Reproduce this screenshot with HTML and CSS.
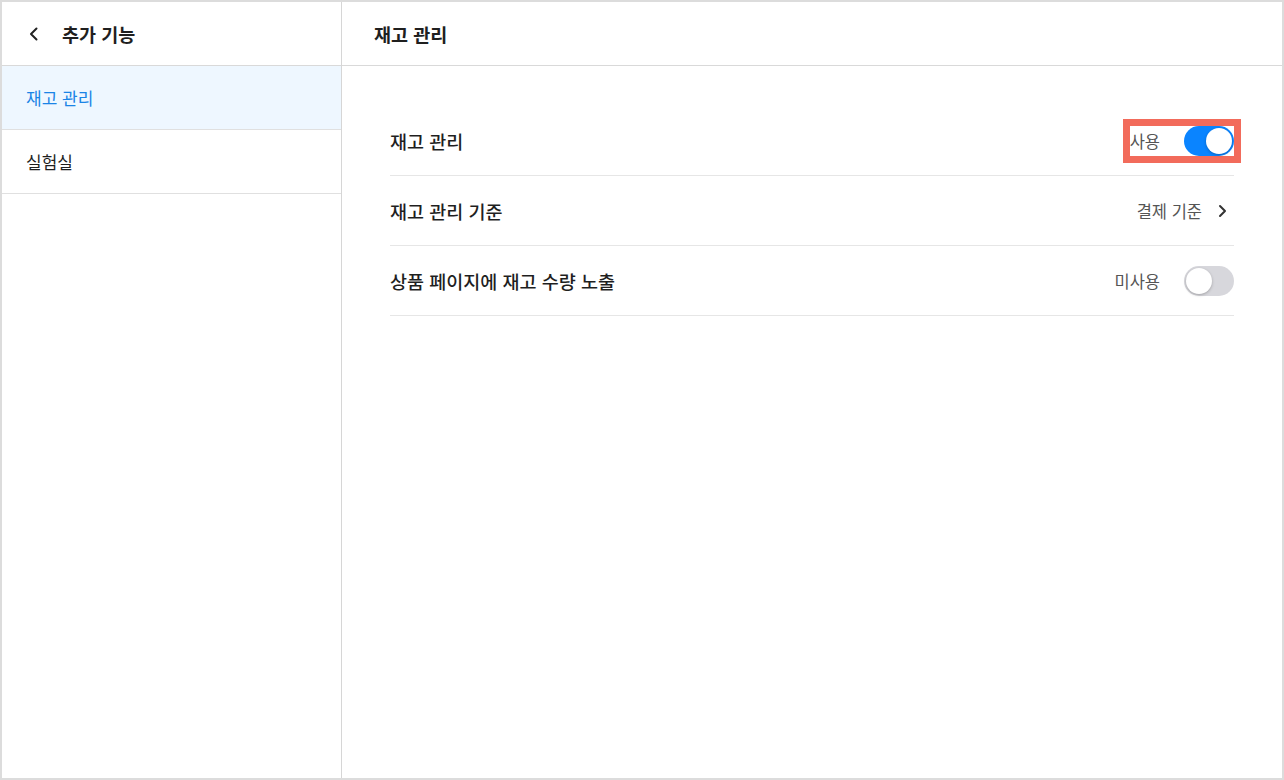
FILE: index.html
```html
<!DOCTYPE html>
<html lang="ko">
<head>
  <meta charset="UTF-8">
  <meta name="viewport" content="width=device-width, initial-scale=1.0">
  <title>재고 관리</title>
  <link rel="stylesheet" href="styles.css">
</head>
<body>

<div class="frame">
  <aside class="sidebar">
    <div class="side-head">
      <svg class="back" width="16" height="16" viewBox="0 0 16 16">
        <polyline points="10.5,2.5 5,8 10.5,13.5" fill="none" stroke="#222" stroke-width="2" stroke-linecap="round" stroke-linejoin="round"/>
      </svg>
      <h1>추가 기능</h1>
    </div>
    <ul class="side-menu">
      <li class="active">재고 관리</li>
      <li>실험실</li>
    </ul>
  </aside>

  <main class="content">
    <div class="content-head">
      <h2>재고 관리</h2>
    </div>
    <div class="settings">
      <div class="row">
        <span class="label">재고 관리</span>
        <div class="value highlight">
          <span>사용</span>
          <span class="toggle on"><span class="knob"></span></span>
        </div>
      </div>
      <div class="row">
        <span class="label">재고 관리 기준</span>
        <div class="value">
          <span>결제 기준</span>
          <svg class="more" width="16" height="16" viewBox="0 0 16 16">
            <polyline points="6,3 11,8 6,13" fill="none" stroke="#333" stroke-width="2" stroke-linecap="round" stroke-linejoin="round"/>
          </svg>
        </div>
      </div>
      <div class="row">
        <span class="label">상품 페이지에 재고 수량 노출</span>
        <div class="value">
          <span>미사용</span>
          <span class="toggle"><span class="knob"></span></span>
        </div>
      </div>
    </div>
  </main>
</div>

</body>
</html>
```

FILE: styles.css
```css
* {
  box-sizing: border-box;
}
body {
  margin: 0;
  font-family: "Noto Sans CJK KR", "Noto Sans", sans-serif;
  color: #222;
  background: #fff;
}
.frame {
  width: 1284px;
  height: 780px;
  border: 2px solid #dcdcdc;
  display: grid;
  grid-template-columns: 340px 1fr;
}

/* left menu */
.sidebar {
  border-right: 1px solid #d6d6d6;
}
.side-head {
  height: 64px;
  border-bottom: 1px solid #d9d9d9;
  display: flex;
  align-items: center;
  padding-left: 24px;
}
.side-head .back {
  margin-right: 20px;
}
.side-head h1 {
  margin: 0;
  font-size: 18.5px;
  font-weight: 700;
  color: #1f1f1f;
}
.side-menu {
  list-style: none;
  margin: 0;
  padding: 0;
}
.side-menu li {
  height: 64px;
  border-bottom: 1px solid #e0e0e0;
  display: flex;
  align-items: center;
  padding-left: 24px;
  font-size: 17px;
  color: #1f1f1f;
}
.side-menu li.active {
  background: #eef7ff;
  color: #1a84e6;
}

/* right panel */
.content-head {
  height: 64px;
  border-bottom: 1px solid #d9d9d9;
  display: flex;
  align-items: center;
  padding-left: 32px;
}
.content-head h2 {
  margin: 0;
  font-size: 18.5px;
  font-weight: 700;
  color: #1f1f1f;
}
.settings {
  padding: 40px 48px 0 48px;
}
.row {
  height: 70px;
  border-bottom: 1px solid #e6e6e6;
  display: flex;
  align-items: center;
  justify-content: space-between;
}
.label {
  font-size: 18.5px;
  font-weight: 500;
  color: #1f1f1f;
}
.value {
  display: flex;
  align-items: center;
  font-size: 16.5px;
  color: #555;
}
.value .more {
  margin-left: 12px;
  margin-right: 4px;
}
.highlight {
  outline: 7px solid #f26b5b;
  background: #fff;
}

/* switch */
.toggle {
  position: relative;
  width: 50px;
  height: 30px;
  border-radius: 15px;
  background: #d7d7dc;
  margin-left: 24px;
}
.toggle.on {
  background: #0a84ff;
}
.knob {
  position: absolute;
  top: 2px;
  left: 2px;
  width: 26px;
  height: 26px;
  border-radius: 50%;
  background: #fff;
  box-shadow: 0 1px 3px rgba(0, 0, 0, 0.25);
}
.toggle.on .knob {
  left: 22px;
}
```
